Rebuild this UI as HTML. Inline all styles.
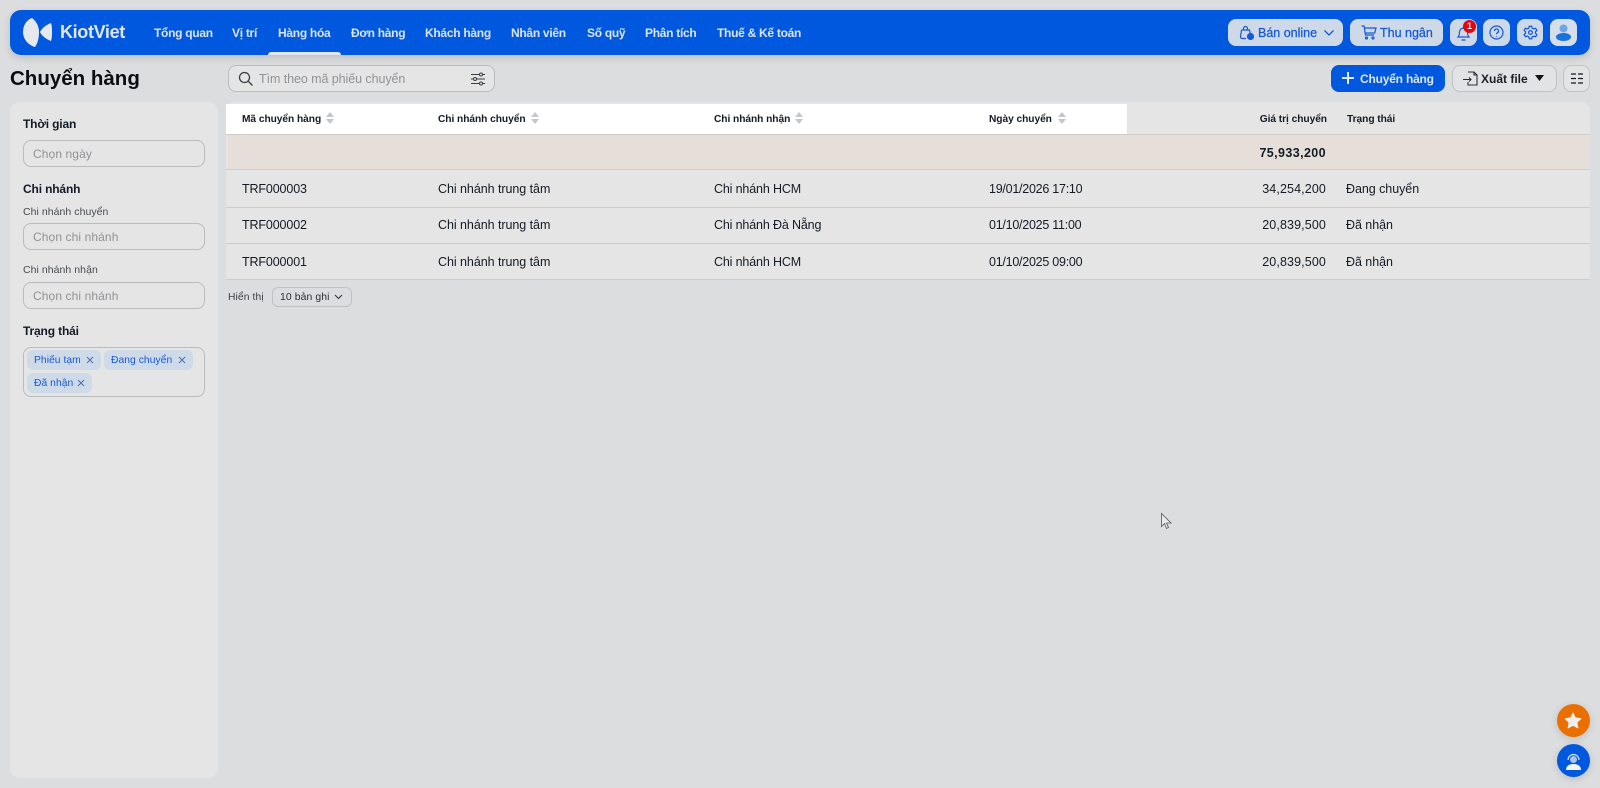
<!DOCTYPE html>
<html lang="vi"><head><meta charset="utf-8"><title>Chuyển hàng</title>
<style>
*{box-sizing:border-box}
html,body{margin:0;padding:0}
body{width:1600px;height:788px;overflow:hidden;background:#dcdddf;position:relative;font-family:"Liberation Sans",sans-serif;color:#141b26}
.a{position:absolute;white-space:nowrap}
.t{position:absolute;white-space:nowrap;line-height:16px;font-size:12.5px;letter-spacing:-.05px}
.nav{color:#dbe4f3;font-weight:700;font-size:12px;top:25px;letter-spacing:-.28px}
.b{font-weight:700}
.h{font-size:12px;letter-spacing:-.15px}
.sub{font-size:10.5px;color:#474b52;letter-spacing:.05px}
.num{letter-spacing:.12px}
.dt{letter-spacing:-.25px}
.id{letter-spacing:-.13px}
.inp{position:absolute;left:23px;width:182px;height:27px;border:1px solid #b9bbbd;border-radius:8px;background:#e5e5e5;color:#8f9296;font-size:12px;line-height:26px;padding-left:9px;letter-spacing:.1px}
.btn{position:absolute;top:19px;height:27px;background:#ced9e7;border-radius:8px}
.th{font-weight:700;font-size:10.2px;top:112px;letter-spacing:-.05px;color:#141b26}
.tag{position:absolute;height:20px;background:#cfdae9;border-radius:6px;color:#1559d6;font-size:10.3px;line-height:22px;padding-left:7px;letter-spacing:.05px}
.line{position:absolute;left:226px;width:1364px;height:1px;background:#cbcccd}
svg{position:absolute;overflow:visible}
.sort{position:absolute;width:8px;height:12px}
</style></head><body>

<!-- Header -->
<div class="a" style="left:10px;top:10px;width:1580px;height:45px;background:#0058de;border-radius:11px;box-shadow:0 3px 8px rgba(0,0,0,.14)"></div>
<svg style="left:23px;top:18px" width="30" height="29" viewBox="0 0 30 29"><path d="M9 0C3 2 0 8 0 14c0 7 5 13 12 15 3-4 4-10 4-15C16 8 13 3 9 0z" fill="#e6e8ec"/><path d="M28 5c-5 2-9 5-11 9 2 4 6 7 11 9 1-3 1-6 1-9s0-6-1-9z" fill="#e6e8ec"/></svg>
<div class="t b" style="left:60px;top:21px;font-size:18px;line-height:22px;color:#dfe6f2;letter-spacing:-.35px">KiotViet</div>
<div class="t nav" style="left:154px">Tổng quan</div>
<div class="t nav" style="left:232px">Vị trí</div>
<div class="t nav" style="left:278px">Hàng hóa</div>
<div class="t nav" style="left:351px">Đơn hàng</div>
<div class="t nav" style="left:425px">Khách hàng</div>
<div class="t nav" style="left:511px">Nhân viên</div>
<div class="t nav" style="left:587px">Số quỹ</div>
<div class="t nav" style="left:645px">Phân tích</div>
<div class="t nav" style="left:717px">Thuế &amp; Kế toán</div>
<div class="a" style="left:268px;top:52px;width:73px;height:3px;background:#dfe6f2;border-radius:3px 3px 0 0"></div>

<div class="btn" style="left:1228px;width:115px"></div>
<svg style="left:1239px;top:25px" width="16" height="16" viewBox="0 0 16 16" fill="none" stroke="#1559d6" stroke-width="1.2"><path d="M2.500 5h8l.8 4M7 13.500H3a1.500 1.500 0 0 1-1.500-1.700L2.500 5M4.500 5V3.500a2 2 0 0 1 4 0V5"/><circle cx="11.500" cy="11.500" r="3" fill="#1559d6"/></svg>
<div class="t" style="left:1258px;top:25px;color:#1559d6;font-size:12.5px;letter-spacing:0;-webkit-text-stroke:.25px #1559d6">Bán online</div>
<svg style="left:1323px;top:29px" width="12" height="8" viewBox="0 0 12 8" fill="none" stroke="#1559d6" stroke-width="1.300"><path d="M1.500 1.500 6 6l4.500-4.500"/></svg>

<div class="btn" style="left:1350px;width:93px"></div>
<svg style="left:1361px;top:25px" width="16" height="15" viewBox="0 0 16 15" fill="none" stroke="#1559d6" stroke-width="1.200"><path d="M.5 1h2.500l1.500 9h8.500M3.300 3h11.700l-1.300 5H4.200"/><circle cx="5.500" cy="13" r="1"/><circle cx="12" cy="13" r="1"/></svg>
<div class="t" style="left:1380px;top:25px;color:#1559d6;font-size:12.5px;letter-spacing:0;-webkit-text-stroke:.25px #1559d6">Thu ngân</div>

<div class="btn" style="left:1450px;width:27px"></div>
<svg style="left:1457px;top:26px" width="13" height="15" viewBox="0 0 13 15" fill="none" stroke="#1559d6" stroke-width="1.200"><path d="M1 11c1-1 1.500-2 1.500-5a4 4 0 0 1 8 0c0 3 .5 4 1.500 5zM4.500 14h4"/></svg>
<div class="a" style="left:1463px;top:20px;width:13px;height:13px;border-radius:50%;background:#e4060f;color:#fff;font-size:9px;font-weight:700;line-height:13px;text-align:center">1</div>

<div class="btn" style="left:1483px;width:27px"></div>
<svg style="left:1489px;top:25px" width="15" height="15" viewBox="0 0 15 15" fill="none" stroke="#1559d6" stroke-width="1.200"><circle cx="7.500" cy="7.500" r="6.500"/><path d="M5.500 6a2 2 0 1 1 3 1.700c-.7.400-1 .8-1 1.500M7.500 11v.6"/></svg>

<div class="btn" style="left:1517px;width:26px"></div>
<svg style="left:1523px;top:25px" width="15" height="15" viewBox="0 0 24 24" fill="none" stroke="#1559d6" stroke-width="2"><circle cx="12" cy="12" r="3"/><path d="M10 2h4l.6 3 2.700 1.300 2.900-1 2 3.500-2.300 2a7 7 0 0 1 0 2.500l2.300 2-2 3.500-2.900-1L14.600 19l-.6 3h-4l-.6-3-2.700-1.300-2.900 1-2-3.500 2.300-2a7 7 0 0 1 0-2.500l-2.300-2 2-3.500 2.900 1L9.400 5z"/></svg>

<div class="btn" style="left:1550px;width:27px;background:#d5deea"></div>
<svg style="left:1556px;top:24px" width="15" height="17" viewBox="0 0 15 17"><circle cx="7.500" cy="4.500" r="4" fill="#6ea5e6"/><ellipse cx="7.500" cy="13" rx="7.500" ry="4" fill="#1a72db"/></svg>

<!-- Toolbar -->
<div class="t b" style="left:10px;top:66px;font-size:20.5px;line-height:26px;color:#0b0d12;letter-spacing:0">Chuyển hàng</div>
<div class="a" style="left:228px;top:65px;width:267px;height:27px;border:1px solid #b9bbbd;border-radius:8px;background:#e5e5e5"></div>
<svg style="left:238px;top:71px" width="16" height="16" viewBox="0 0 16 16" fill="none" stroke="#3a3f47" stroke-width="1.300"><circle cx="6.500" cy="6.500" r="5"/><path d="m10.500 10.500 4 4"/></svg>
<div class="t" style="left:259px;top:71px;color:#909397;letter-spacing:-.07px">Tìm theo mã phiếu chuyển</div>
<svg style="left:471px;top:72px" width="14" height="14" viewBox="0 0 14 14" fill="none" stroke="#3a3f47" stroke-width="1"><path d="M0 2.500h8.500M11.500 2.500H14M0 7h2.500M5.500 7H14M0 11.500h8.500M11.500 11.500H14"/><circle cx="10" cy="2.500" r="1.500"/><circle cx="4" cy="7" r="1.500"/><circle cx="10" cy="11.500" r="1.500"/></svg>

<div class="a" style="left:1331px;top:65px;width:114px;height:27px;background:#0058de;border-radius:8px"></div>
<svg style="left:1342px;top:72px" width="12" height="12" viewBox="0 0 12 12" stroke="#e4eaf4" stroke-width="2"><path d="M6 0v12M0 6h12"/></svg>
<div class="t b" style="left:1360px;top:71px;color:#dfe6f2;font-size:12px;letter-spacing:-.2px">Chuyển hàng</div>
<div class="a" style="left:1452px;top:65px;width:105px;height:27px;background:#e2e3e4;border:1px solid #bfc1c3;border-radius:8px"></div>
<svg style="left:1463px;top:71px" width="15" height="15" viewBox="0 0 15 15" fill="none" stroke="#2a2e35" stroke-width="1.100"><path d="M5 1h6l3 3v10H5v-3M11 1v3h3M0 8.500h8M6 6.500l2 2-2 2"/></svg>
<div class="t b" style="left:1481px;top:71px;font-size:12px;letter-spacing:0;color:#1b1f27">Xuất file</div>
<svg style="left:1535px;top:75px" width="9" height="6" viewBox="0 0 9 6"><path d="M0 0h9L4.500 6z" fill="#111"/></svg>
<div class="a" style="left:1563px;top:65px;width:27px;height:27px;background:#e2e3e4;border:1px solid #bfc1c3;border-radius:8px"></div>
<svg style="left:1571px;top:73px" width="12" height="11" viewBox="0 0 12 11" stroke="#15181e" stroke-width="1.300"><path d="M0 1h5M7 1h5M0 5.500h5M7 5.500h5M0 10h5M7 10h5"/></svg>

<!-- Sidebar -->
<div class="a" style="left:10px;top:102px;width:208px;height:676px;background:#e5e5e5;border-radius:10px"></div>
<div class="t b h" style="left:23px;top:116px">Thời gian</div>
<div class="inp" style="top:140px">Chọn ngày</div>
<div class="t b h" style="left:23px;top:181px">Chi nhánh</div>
<div class="t sub" style="left:23px;top:204px">Chi nhánh chuyển</div>
<div class="inp" style="top:223px">Chọn chi nhánh</div>
<div class="t sub" style="left:23px;top:262px">Chi nhánh nhận</div>
<div class="inp" style="top:282px">Chọn chi nhánh</div>
<div class="t b h" style="left:23px;top:323px">Trạng thái</div>
<div class="a" style="left:23px;top:347px;width:182px;height:50px;border:1px solid #b9bbbd;border-radius:8px"></div>
<div class="tag" style="left:27px;top:350px;width:74px">Phiếu tạm</div>
<div class="tag" style="left:104px;top:350px;width:89px">Đang chuyển</div>
<div class="tag" style="left:27px;top:373px;width:65px">Đã nhận</div>
<svg style="left:86px;top:356px" width="8" height="8" stroke="#4a6fb0" stroke-width="1"><path d="M1 1l6 6M7 1l-6 6"/></svg>
<svg style="left:178px;top:356px" width="8" height="8" stroke="#4a6fb0" stroke-width="1"><path d="M1 1l6 6M7 1l-6 6"/></svg>
<svg style="left:77px;top:379px" width="8" height="8" stroke="#4a6fb0" stroke-width="1"><path d="M1 1l6 6M7 1l-6 6"/></svg>

<!-- Table -->
<div class="a" style="left:226px;top:102px;width:1364px;height:177px;background:#e5e5e5;border-radius:8px 8px 0 0"></div>
<div class="a" style="left:226px;top:104px;width:901px;height:30px;background:#fff"></div>
<div class="a" style="left:228px;top:135px;width:1362px;height:34px;background:#e6dfd9"></div>
<div class="line" style="top:134px"></div>
<div class="line" style="top:169px"></div>
<div class="line" style="top:207px"></div>
<div class="line" style="top:243px"></div>
<div class="line" style="top:279px"></div>

<div class="t th" style="left:242px">Mã chuyển hàng</div>
<div class="t th" style="left:438px">Chi nhánh chuyển</div>
<div class="t th" style="left:714px">Chi nhánh nhận</div>
<div class="t th" style="left:989px">Ngày chuyển</div>
<div class="t th" style="right:273px">Giá trị chuyển</div>
<div class="t th" style="left:1347px">Trạng thái</div>
<svg class="sort" style="left:326px;top:112px" viewBox="0 0 8 12"><path d="M4 0l4 5H0zM0 7h8l-4 5z" fill="#c3c6ca"/></svg>
<svg class="sort" style="left:531px;top:112px" viewBox="0 0 8 12"><path d="M4 0l4 5H0zM0 7h8l-4 5z" fill="#c3c6ca"/></svg>
<svg class="sort" style="left:795px;top:112px" viewBox="0 0 8 12"><path d="M4 0l4 5H0zM0 7h8l-4 5z" fill="#c3c6ca"/></svg>
<svg class="sort" style="left:1058px;top:112px" viewBox="0 0 8 12"><path d="M4 0l4 5H0zM0 7h8l-4 5z" fill="#c3c6ca"/></svg>

<div class="t b" style="right:274px;top:145px;letter-spacing:.4px">75,933,200</div>

<div class="t id" style="left:242px;top:181px">TRF000003</div>
<div class="t" style="left:438px;top:181px">Chi nhánh trung tâm</div>
<div class="t" style="left:714px;top:181px;letter-spacing:-.15px">Chi nhánh HCM</div>
<div class="t dt" style="left:989px;top:181px">19/01/2026 17:10</div>
<div class="t num" style="right:274px;top:181px">34,254,200</div>
<div class="t" style="left:1346px;top:181px">Đang chuyển</div>

<div class="t id" style="left:242px;top:217px">TRF000002</div>
<div class="t" style="left:438px;top:217px">Chi nhánh trung tâm</div>
<div class="t" style="left:714px;top:217px;letter-spacing:-.15px">Chi nhánh Đà Nẵng</div>
<div class="t dt" style="left:989px;top:217px">01/10/2025 11:00</div>
<div class="t num" style="right:274px;top:217px">20,839,500</div>
<div class="t" style="left:1346px;top:217px">Đã nhận</div>

<div class="t id" style="left:242px;top:254px">TRF000001</div>
<div class="t" style="left:438px;top:254px">Chi nhánh trung tâm</div>
<div class="t" style="left:714px;top:254px;letter-spacing:-.15px">Chi nhánh HCM</div>
<div class="t dt" style="left:989px;top:254px">01/10/2025 09:00</div>
<div class="t num" style="right:274px;top:254px">20,839,500</div>
<div class="t" style="left:1346px;top:254px">Đã nhận</div>

<div class="t" style="left:228px;top:290px;font-size:10.3px;letter-spacing:.1px;color:#3a3e45">Hiển thị</div>
<div class="a" style="left:272px;top:287px;width:80px;height:20px;border:1px solid #bfc1c3;border-radius:6px"></div>
<div class="t" style="left:280px;top:290px;font-size:10.4px;letter-spacing:.1px;color:#2a2e35">10 bản ghi</div>
<svg style="left:334px;top:294px" width="9" height="6" fill="none" stroke="#2a2e35" stroke-width="1"><path d="M1 1l3.500 3.500L8 1"/></svg>

<!-- Floating -->
<div class="a" style="left:1557px;top:704px;width:33px;height:33px;border-radius:50%;background:#ea6f00;box-shadow:0 2px 8px rgba(0,0,0,.15)"></div>
<svg style="left:1565px;top:713px" width="16" height="15" viewBox="0 0 18 17"><path d="M9 0l2.700 5.500 6.300.9-4.500 4.300 1.100 6.300L9 14l-5.600 3 1.100-6.300L0 6.400l6.300-.9z" fill="#f1efec" stroke="#f1efec" stroke-linejoin="round"/></svg>
<div class="a" style="left:1557px;top:744px;width:33px;height:33px;border-radius:50%;background:#0058de;box-shadow:0 2px 8px rgba(0,0,0,.15)"></div>
<svg style="left:1565px;top:753px" width="17" height="18" viewBox="0 0 17 18"><path d="M3 7a5.500 5.500 0 1 1 11 0" fill="none" stroke="#dbe4f3" stroke-width="1.200"/><circle cx="8.500" cy="6.500" r="3.500" fill="#a9c4ef"/><path d="M1 17c0-4 3-6 7.500-6s7.500 2 7.500 6z" fill="#f3f5f8"/></svg>

<!-- Cursor -->
<svg style="left:1161px;top:513px" width="12" height="17" viewBox="0 0 12 17"><path d="M.5.5v13l3-3 2 5 2-1-2-4.500H10z" fill="#e9eaeb" stroke="#55585c" stroke-width=".8"/></svg>
</body></html>
